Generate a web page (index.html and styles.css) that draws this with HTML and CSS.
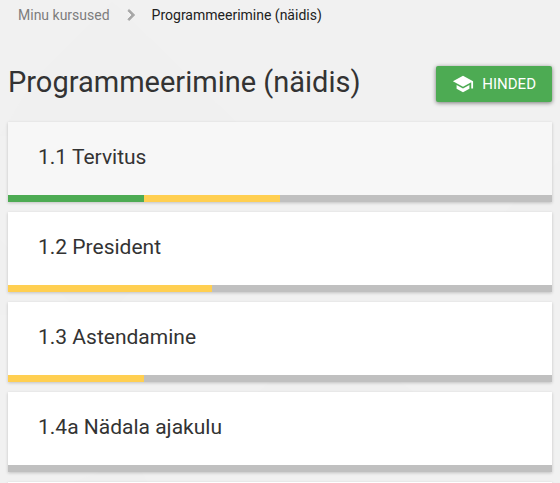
FILE: index.html
```html
<!DOCTYPE html>
<html lang="et">
<head>
  <meta charset="UTF-8">
  <meta name="viewport" content="width=device-width, initial-scale=1">
  <title>Programmeerimine (näidis)</title>
  <link rel="stylesheet" href="styles.css">
</head>
<body>
  <nav class="breadcrumb">
    <a href="#" class="crumb">Minu kursused</a>
    <svg class="chevron" viewBox="0 0 24 24" aria-hidden="true">
      <path d="M10 6 8.59 7.41 13.17 12l-4.58 4.59L10 18l6-6z"/>
    </svg>
    <a href="#" class="crumb current">Programmeerimine (näidis)</a>
  </nav>

  <main>
    <header class="course-header">
      <h1>Programmeerimine (näidis)</h1>
      <button type="button" class="grades-button">
        <svg class="school-icon" viewBox="0 0 24 24" aria-hidden="true">
          <path d="M5 13.18v4L12 21l7-3.82v-4L12 17l-7-3.82zM12 3 1 9l11 6 9-4.91V17h2V9L12 3z"/>
        </svg>
        Hinded
      </button>
    </header>

    <div class="exercise-list">
      <a href="#" class="exercise active">
        <span class="exercise-title">1.1 Tervitus</span>
        <span class="progress">
          <span class="completed" style="width: 25%"></span>
          <span class="started" style="width: 25%"></span>
        </span>
      </a>
      <a href="#" class="exercise">
        <span class="exercise-title">1.2 President</span>
        <span class="progress">
          <span class="started" style="width: 37.5%"></span>
        </span>
      </a>
      <a href="#" class="exercise">
        <span class="exercise-title">1.3 Astendamine</span>
        <span class="progress">
          <span class="started" style="width: 25%"></span>
        </span>
      </a>
      <a href="#" class="exercise">
        <span class="exercise-title">1.4a Nädala ajakulu</span>
        <span class="progress"></span>
      </a>
      <div class="exercise"></div>
    </div>
  </main>
</body>
</html>
```

FILE: styles.css
```css
* {
  box-sizing: border-box;
}

body {
  height: 100vh;
  margin: 0;
  padding: 0 8px;
  overflow: hidden;
  font-family: Roboto, sans-serif;
  color: #333;
  background-color: #f1f1f1;
  /* faint shapes behind the cards */
  background-image: url("data:image/svg+xml,%3Csvg xmlns='http://www.w3.org/2000/svg' width='560' height='483'%3E%3Cg fill='%23f0f0f0'%3E%3Cpath d='M112 2 34 80 0 136H250zM0 240V315H8V248zM60 292 70 302H120L130 292z'/%3E%3Cpath d='M560 160 500 216V240H560zM258 392 330 330 414 392zM70 483 100 472H142L148 483z'/%3E%3C/g%3E%3C/svg%3E");
  background-repeat: no-repeat;
}

a {
  color: inherit;
  text-decoration: none;
}

/* Breadcrumb */
.breadcrumb {
  display: flex;
  align-items: center;
  gap: 10px;
  height: 30px;
  padding: 0 10px;
  font-size: 14px;
}

.crumb {
  color: #7d7d7d;
}

.crumb.current {
  color: #212121;
}

.chevron {
  width: 22px;
  height: 22px;
  fill: #a6a6a6;
  stroke: #a6a6a6;
}

/* Course title and grades button */
.course-header {
  display: flex;
  align-items: flex-start;
  justify-content: space-between;
  padding: 36px 0 20px;
}

h1 {
  margin: 0;
  font-size: 29px;
  font-weight: 400;
  line-height: 32px;
}

.grades-button {
  display: flex;
  align-items: center;
  gap: 8px;
  height: 36px;
  padding: 0 16px;
  border: 0;
  border-radius: 2px;
  background-color: #4dab53;
  box-shadow: 0 1px 4px rgba(0, 0, 0, 0.5);
  color: #fff;
  font-family: inherit;
  font-size: 15px;
  font-weight: 400;
  text-transform: uppercase;
  cursor: pointer;
}

.school-icon {
  width: 22px;
  height: 22px;
  fill: currentColor;
}

/* Exercise cards */
.exercise-list {
  display: grid;
  gap: 10px;
}

.exercise {
  display: flex;
  flex-direction: column;
  justify-content: space-between;
  min-height: 80px;
  background-color: #fff;
  box-shadow: 0 1px 3px rgba(0, 0, 0, 0.2);
}

.exercise.active {
  background-color: #f7f7f7;
}

.exercise-title {
  padding: 23px 30px 0;
  font-size: 21px;
  line-height: 24px;
}

.progress {
  display: flex;
  height: 7px;
  background-color: #c0c0c0;
}

.completed {
  background-color: #4dab53;
}

.started {
  background-color: #ffcf51;
}
```
